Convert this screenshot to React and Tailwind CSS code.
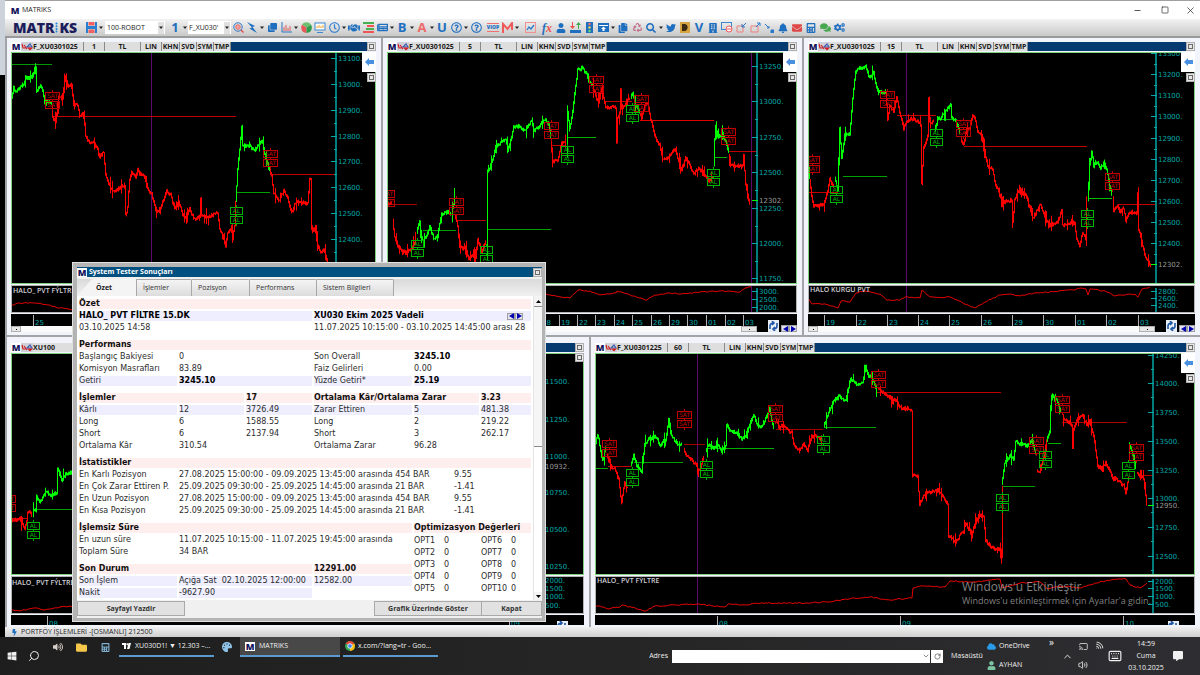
import { ChevronDown, ChevronUp, Search, Keyboard, Volume2, Wifi, RotateCw, Minus, Square, X, Cast } from 'lucide-react';
import {
  FaBolt, FaClone, FaRegClock, FaHandshake, FaNewspaper, FaRegQuestionCircle,
  FaUser, FaTrafficLight, FaCopy, FaRecycle, FaTwitter, FaBuilding, FaBell, FaEnvelope, FaCalculator,
  FaCogs, FaComments, FaWindows, FaCloud, FaFolder, FaPalette, FaVolumeUp, FaCommentAlt, FaUpload, FaSearch,
} from 'react-icons/fa';

const RED = '#ff0000';
const GREEN = '#00ff00';
const TEAL = '#00a8a8';
const WIDE_FONT = "'DejaVu Sans', sans-serif";

// Price series: [color, [[x, y], ...]]. Levels: [color, x1, x2, y]. Marks: x, top y of the first box.
const CHARTS = {
  one: {
    origin: [12, 53],
    cursor: 151,
    axis: 336,
    scale: [[58, '13100.'], [84, '13000.'], [110, '12900.'], [136, '12800.'], [161, '12700.'], [187, '12600.'], [213, '12500.'], [239, '12400.'], [265, '12300.']],
    levels: [['#009800', 12, 52, 64], ['#c00000', 53, 236, 116], ['#00a000', 237, 270, 192], ['#c00000', 271, 336, 174]],
    series: [
      [GREEN, [[12, 98], [14, 88], [17, 92], [21, 86], [24, 84], [26, 77], [33, 76], [35, 69], [36, 66], [37, 92], [40, 86], [42, 87], [45, 99], [48, 101], [52, 103]]],
      [RED, [[52, 105], [53, 118], [56, 120], [58, 108], [59, 95], [63, 99], [65, 76], [68, 85], [72, 84], [74, 105], [78, 105], [80, 116], [84, 112], [86, 135], [90, 143], [94, 141], [98, 150], [100, 156], [104, 152], [106, 175], [111, 188], [114, 191], [120, 187], [125, 185], [126, 215], [128, 207], [130, 178], [132, 172], [136, 176], [138, 170], [140, 173], [145, 176], [148, 188], [152, 194], [157, 212], [162, 205], [167, 190], [171, 195], [175, 208], [179, 200], [183, 215], [186, 218], [190, 208], [195, 219], [200, 216], [201, 198], [202, 216], [210, 216], [218, 213], [220, 228], [224, 238], [226, 245], [228, 232], [232, 228], [233, 235], [235, 225], [236, 200]]],
      [GREEN, [[236, 200], [238, 170], [240, 150], [242, 126], [243, 145], [249, 145], [254, 150], [257, 148], [261, 141], [263, 142], [266, 158], [270, 170]]],
      [RED, [[270, 170], [272, 176], [274, 192], [277, 198], [280, 200], [284, 190], [288, 198], [292, 212], [296, 202], [308, 203], [310, 179], [311, 180], [312, 230], [316, 228], [318, 245], [321, 252], [324, 250], [328, 262]]],
    ],
    sat: [[45, 92], [263, 150]],
    al: [[230, 207]],
    study: { name: 'HALO_ PVT FÝLTRE', origin: [12, 286], nameAt: [13, 293], scale: [], line: [[12, 305], [20, 303], [36, 303], [48, 305], [60, 308], [72, 310], [85, 309]] },
    time: { origin: [11, 314], ticks: [[33, '25']] },
  },
  two: {
    origin: [388, 53],
    cursor: 751,
    axis: 757,
    last: [200, '12302.'],
    scale: [[66, '13250.'], [101, '13000.'], [137, '12750.'], [172, '12500.'], [208, '12250.'], [243, '12000.'], [278, '11750.']],
    levels: [['#a80000', 388, 417, 204], ['#00a000', 423, 456, 230], ['#c00000', 458, 486, 220], ['#00a000', 487, 551, 229], ['#c00000', 551, 565, 145], ['#00b000', 568, 596, 137], ['#c00000', 605, 632, 101], ['#e00000', 640, 714, 120], ['#00b000', 715, 727, 157], ['#c00000', 729, 757, 151]],
    series: [
      [RED, [[388, 204], [392, 203]]],
      [RED, [[393, 220], [395, 237], [398, 245], [402, 250], [406, 252], [412, 248], [415, 243], [416, 235]]],
      [GREEN, [[417, 232], [420, 220], [421, 236], [424, 240], [427, 236], [430, 226], [434, 238], [438, 236], [440, 224], [442, 214], [446, 212], [452, 213], [454, 205], [454, 188]]],
      [RED, [[455, 215], [458, 225], [460, 247], [466, 248], [469, 258], [474, 254], [476, 258], [478, 238], [482, 252], [486, 240]]],
      [GREEN, [[487, 260], [487, 172], [490, 168], [493, 158], [496, 146], [500, 143], [506, 138], [508, 150], [511, 140], [514, 126], [520, 126], [525, 130], [532, 120], [534, 130], [539, 127], [545, 119], [549, 123], [551, 137]]],
      [RED, [[551, 140], [553, 161], [558, 160], [562, 143], [566, 141]]],
      [GREEN, [[567, 150], [568, 112], [570, 128], [573, 112], [576, 85], [578, 70], [583, 67], [587, 74], [590, 82], [593, 85]]],
      [RED, [[593, 85], [597, 100], [600, 97], [602, 88], [606, 107], [612, 106], [616, 108], [617, 143], [618, 118], [620, 113], [621, 90], [622, 108], [630, 98]]],
      [GREEN, [[631, 97], [633, 92], [636, 105], [640, 112]]],
      [RED, [[640, 113], [642, 118], [645, 106], [648, 103], [651, 118], [656, 138], [660, 145], [663, 158], [668, 158], [672, 152], [675, 149], [679, 160], [682, 170], [686, 158], [690, 165], [694, 174], [699, 168], [705, 174], [709, 180], [713, 176]]],
      [GREEN, [[714, 165], [715, 140], [716, 126], [718, 136], [723, 134], [727, 145], [729, 152]]],
      [RED, [[729, 155], [731, 165], [737, 166], [743, 165], [744, 155], [746, 185], [750, 203]]],
    ],
    sat: [[380, 190], [449, 198], [544, 122], [589, 76], [634, 95], [721, 128]],
    al: [[411, 240], [480, 246], [561, 146], [626, 105], [707, 169]],
    study: {
      origin: [388, 286],
      scale: [[291, '3000.'], [299, '2500.'], [307, '2000.']],
      line: [[530, 296], [546, 294], [560, 297], [570, 298], [578, 290], [590, 291], [600, 295], [616, 293], [617, 291], [630, 295], [640, 298], [647, 300], [655, 295], [668, 293], [680, 294], [700, 292], [720, 291], [740, 292], [745, 288], [751, 287]],
    },
    time: { origin: [387, 314], ticks: [[540, '18'], [559, '19'], [577, '22'], [595, '23'], [614, '24'], [632, '25'], [651, '26'], [669, '29'], [687, '30'], [706, '01'], [725, '02'], [743, '03']] },
  },
  three: {
    origin: [809, 53],
    cursor: 906,
    axis: 1156,
    last: [264, '12302.'],
    scale: [[53, '13300.'], [74, '13200.'], [95, '13100.'], [116, '13000.'], [138, '12900.'], [159, '12800.'], [180, '12700.'], [201, '12600.'], [222, '12500.'], [243, '12400.']],
    levels: [['#c00000', 808, 838, 192], ['#00a000', 843, 887, 176], ['#c00000', 897, 936, 115], ['#00b000', 938, 956, 119], ['#c00000', 964, 1087, 146], ['#00c000', 1088, 1112, 198], ['#c00000', 1118, 1156, 204]],
    series: [
      [GREEN, [[808, 150], [809, 168], [810, 178]]],
      [RED, [[810, 180], [812, 197], [814, 205], [824, 205], [828, 190], [830, 178], [834, 186]]],
      [GREEN, [[835, 178], [838, 190], [839, 165], [840, 128], [842, 158], [845, 134], [850, 134], [852, 110], [854, 88], [856, 72], [859, 68], [866, 66], [870, 78], [874, 72], [877, 88], [880, 92], [886, 91]]],
      [RED, [[886, 92], [888, 118], [890, 105], [894, 112], [897, 97], [900, 112], [904, 128], [907, 122], [912, 118], [918, 121], [921, 124], [922, 183], [924, 148], [928, 135], [929, 98], [930, 122], [934, 122]]],
      [GREEN, [[935, 130], [938, 120], [943, 115], [948, 108], [951, 104], [952, 118], [956, 120], [960, 132]]],
      [RED, [[961, 138], [964, 145], [967, 128], [970, 128], [973, 114], [976, 120], [978, 132], [982, 134], [984, 146], [988, 165], [993, 170], [995, 180], [1000, 195], [1003, 202], [1012, 200], [1013, 222], [1015, 198], [1020, 190], [1026, 195], [1028, 200], [1033, 218], [1041, 204], [1045, 217], [1050, 225], [1058, 222], [1062, 210], [1063, 225], [1073, 222], [1075, 223], [1077, 238], [1080, 245], [1083, 232], [1086, 238], [1087, 200]]],
      [GREEN, [[1088, 200], [1090, 165], [1092, 152], [1094, 165], [1098, 163], [1101, 168], [1104, 162], [1107, 170], [1110, 185], [1112, 195]]],
      [RED, [[1113, 197], [1114, 210], [1118, 205], [1120, 212], [1124, 208], [1126, 220], [1130, 212], [1137, 213], [1138, 194], [1139, 230], [1142, 240], [1145, 255], [1148, 260], [1151, 266]]],
    ],
    sat: [[805, 156], [880, 91], [956, 120], [1105, 173]],
    al: [[830, 186], [930, 129], [1081, 210]],
    study: {
      name: 'HALO KURGU PVT',
      nameAt: [810, 292],
      origin: [809, 286],
      scale: [[291, '2800.'], [298, '2600.'], [305, '2400.']],
      line: [[808, 298], [812, 304], [825, 304], [838, 308], [841, 301], [850, 302], [856, 293], [865, 291], [880, 294], [887, 300], [900, 300], [905, 297], [920, 298], [922, 290], [930, 297], [950, 297], [965, 304], [975, 308], [985, 302], [1000, 295], [1010, 294], [1020, 296], [1035, 293], [1075, 290], [1080, 288], [1086, 289], [1088, 295], [1090, 289], [1105, 291], [1115, 296], [1135, 294], [1138, 297], [1142, 289], [1150, 287]],
    },
    time: { origin: [808, 314], ticks: [[824, '19'], [856, '22'], [887, '23'], [918, '24'], [949, '25'], [981, '26'], [1012, '29'], [1043, '30'], [1075, '01'], [1106, '02'], [1138, '03']] },
  },
  four: {
    origin: [12, 354],
    axis: 543,
    last: [466, '10932.'],
    scale: [[381, '11500.'], [419, '11250.'], [456, '11000.'], [492, '10750.'], [529, '10500.'], [566, '10250.']],
    levels: [['#c00000', 10, 28, 518], ['#00a000', 36, 80, 509]],
    series: [
      [RED, [[9, 516], [14, 520], [20, 518], [25, 528], [27, 520], [28, 512], [32, 512]]],
      [GREEN, [[33, 511], [36, 510], [37, 495], [40, 502], [46, 492], [52, 495], [57, 492], [58, 468], [62, 480], [66, 474], [72, 472], [80, 470]]],
    ],
    sat: [[1, 495]],
    al: [[27, 522]],
    study: { name: 'HALO_ PVT FÝLTRE', nameAt: [12, 585], origin: [12, 577], scale: [[580, '2000.'], [588, '1500.'], [596, '1000.'], [605, '500.']], line: [[9, 610], [20, 611], [35, 608], [45, 610], [60, 607], [80, 606]] },
    time: { origin: [11, 615], ticks: [[47, '08'], [509, '09']] },
  },
  five: {
    origin: [596, 354],
    cursor: 697,
    axis: 1153,
    last: [505, '12950.'],
    scale: [[355, '14250.'], [383, '14000.'], [412, '13750.'], [441, '13500.'], [470, '13250.'], [498, '13000.'], [527, '12750.'], [556, '12500.']],
    levels: [['#00b000', 595, 608, 468], ['#c00000', 608, 631, 466], ['#00a000', 634, 683, 462], ['#a00000', 684, 705, 444], ['#00b000', 706, 774, 448], ['#a00000', 776, 823, 429], ['#00a000', 824, 876, 427], ['#c00000', 877, 1001, 392], ['#00a000', 1003, 1035, 486], ['#00b000', 1048, 1061, 443], ['#b00000', 1062, 1127, 422], ['#b00000', 1139, 1153, 475]],
    series: [
      [GREEN, [[595, 446], [598, 434], [601, 450], [603, 460], [606, 448]]],
      [RED, [[607, 455], [611, 465], [616, 470], [619, 480], [622, 502], [625, 482], [628, 488]]],
      [GREEN, [[631, 465], [634, 455], [638, 468], [642, 470], [645, 445], [650, 438], [656, 436], [660, 444], [666, 440], [669, 420], [672, 436], [678, 444], [682, 444]]],
      [RED, [[684, 448], [687, 456], [692, 460], [697, 466], [700, 470], [704, 455]]],
      [GREEN, [[706, 450], [710, 445], [714, 448], [718, 444], [722, 450], [726, 446], [727, 425], [730, 430], [736, 432], [742, 438], [746, 436], [750, 424], [754, 415], [758, 425], [762, 427], [766, 418], [770, 408], [772, 420], [774, 428]]],
      [RED, [[776, 420], [780, 428], [784, 424], [788, 430], [792, 432], [794, 444], [798, 450], [804, 444], [808, 450], [812, 436], [818, 436], [822, 440]]],
      [GREEN, [[824, 425], [828, 416], [834, 400], [840, 396], [846, 400], [851, 378], [858, 384], [863, 382], [866, 366], [868, 374], [874, 380], [877, 392]]],
      [RED, [[878, 388], [884, 392], [890, 398], [896, 400], [902, 408], [908, 408], [912, 410], [913, 475], [918, 476], [920, 504], [925, 494], [932, 492], [938, 490], [944, 496], [948, 504], [949, 535], [956, 542], [964, 530], [966, 522], [972, 535], [976, 520], [980, 515], [984, 515], [986, 540], [992, 548], [998, 548], [1001, 550], [1002, 558], [1002, 486]]],
      [GREEN, [[1002, 484], [1005, 462], [1010, 456], [1014, 458], [1016, 442], [1022, 444], [1028, 445], [1033, 440], [1036, 455]]],
      [RED, [[1037, 470], [1040, 472], [1044, 458], [1047, 445]]],
      [GREEN, [[1047, 440], [1050, 432], [1051, 405], [1053, 395], [1057, 400], [1061, 410]]],
      [RED, [[1063, 418], [1066, 420], [1072, 424], [1073, 448], [1074, 428], [1078, 418], [1083, 416], [1087, 424], [1090, 420], [1094, 435], [1098, 466], [1102, 468], [1106, 462], [1110, 470], [1114, 478], [1119, 480], [1124, 485], [1126, 494], [1129, 478]]],
      [GREEN, [[1129, 460], [1129, 443], [1131, 448], [1134, 455], [1136, 468]]],
      [RED, [[1137, 472], [1140, 476], [1143, 476], [1144, 480], [1147, 503]]],
    ],
    sat: [[602, 440], [677, 411], [768, 405], [871, 371], [1029, 437], [1055, 396], [1129, 444]],
    al: [[626, 469], [700, 461], [817, 436], [996, 494], [1039, 451], [1122, 462]],
    study: {
      name: 'HALO_ PVT FÝLTRE',
      nameAt: [597, 583],
      origin: [596, 577],
      scale: [[581, '2000.'], [588, '1500.'], [596, '1000.'], [604, '500.']],
      line: [[595, 606], [600, 606], [608, 609], [620, 607], [622, 605], [635, 608], [645, 611], [655, 606], [697, 604], [725, 607], [728, 604], [740, 605], [765, 603], [800, 603], [830, 602], [845, 599], [870, 597], [890, 600], [912, 598], [913, 588], [920, 586], [945, 587], [950, 581], [975, 582], [1000, 579], [1002, 588], [1020, 583], [1040, 582], [1048, 589], [1060, 586], [1080, 588], [1095, 583], [1110, 580], [1126, 579], [1130, 585], [1140, 588], [1147, 583]],
    },
    time: { origin: [595, 615], ticks: [[717, '08'], [900, '09'], [1123, '10']] },
  },
};

function makeRandom(points) {
  let seed = points[0][0] * 7 + points[0][1];
  return () => {
    seed = (seed * 1103515245 + 12345) % 2147483648;
    return seed / 2147483648;
  };
}

// One bar per pixel column with a repeatable wiggle
function barsPath(points) {
  const rand = makeRandom(points);
  let d = '';
  let prev = points[0][1];
  for (let i = 1; i < points.length; i += 1) {
    const [x0, y0] = points[i - 1];
    const [x1, y1] = points[i];
    if (x0 === x1) {
      d += `M${x0 + 0.5} ${y0}V${y1}`;
      prev = y1;
      continue;
    }
    for (let x = x0; x < x1; x += 1) {
      const y = y0 + ((y1 - y0) * (x - x0 + 1)) / (x1 - x0) + (rand() - 0.5) * 2.5;
      const wick = rand() > 0.82 ? 8 : 1.5;
      const top = Math.min(prev, y) - rand() * wick;
      const bottom = Math.max(prev, y) + 0.8 + rand() * wick;
      d += `M${x + 0.5} ${top.toFixed(1)}V${bottom.toFixed(1)}`;
      prev = y;
    }
  }
  return d;
}

function linePath(points) {
  const rand = makeRandom(points);
  let d = `M${points[0][0]} ${points[0][1]}`;
  for (let i = 1; i < points.length; i += 1) {
    const [x0, y0] = points[i - 1];
    const [x1, y1] = points[i];
    for (let x = x0 + 2; x < x1; x += 2) {
      d += `L${x} ${(y0 + ((y1 - y0) * (x - x0)) / (x1 - x0) + (rand() - 0.5) * 1.2).toFixed(1)}`;
    }
    d += `L${x1} ${y1}`;
  }
  return d;
}

function Mark({ x, y, text, color }) {
  const width = text === 'AL' ? 12 : 14;
  const middle = x + width / 2 + 0.5;
  return (
    <g>
      <path d={`M${middle} ${y - 2}v2M${middle} ${y + 7}v2M${middle} ${y + 16}v3`} stroke={color} />
      {[y, y + 9].map((top) => (
        <g key={top}>
          <rect x={x + 0.5} y={top + 0.5} width={width} height="7" fill="none" stroke={color} />
          <text x={middle} y={top + 6} textAnchor="middle" fontSize="6" fontFamily={WIDE_FONT} fill={color}>{text}</text>
        </g>
      ))}
    </g>
  );
}

function Scale({ axis, rows, top, bottom, minor }) {
  return (
    <g>
      <path d={`M${axis} ${top}V${bottom}`} stroke={TEAL} strokeWidth="1.5" />
      {rows.map(([y, label]) => (
        <g key={label}>
          <path d={`M${axis - 5} ${y + 0.5}h6`} stroke={TEAL} />
          {minor && <path d={`M${axis - 2} ${y + minor + 0.5}h3`} stroke={TEAL} />}
          <text x={axis + 2} y={y + 3} fontSize="7" fontFamily={WIDE_FONT} fill={TEAL}>{label}</text>
        </g>
      ))}
    </g>
  );
}

function PriceChart({ chart }) {
  const [ox, oy] = chart.origin;
  const minor = Math.round((chart.scale[1][0] - chart.scale[0][0]) / 2);
  return (
    <svg className="block h-full w-full bg-black" role="img" aria-label="Price chart">
      <g transform={`translate(${-ox} ${-oy})`}>
        {chart.cursor && <path d={`M${chart.cursor + 0.5} ${oy}v400`} stroke="#5c0a6b" />}
        {chart.levels.map(([color, x1, x2, y]) => (
          <path key={`${x1}-${y}`} d={`M${x1} ${y + 0.5}H${x2}`} stroke={color} />
        ))}
        {chart.series.map(([color, points]) => (
          <path key={points[0].join('-')} d={barsPath(points)} stroke={color} />
        ))}
        {chart.sat.map(([x, y]) => <Mark key={x} x={x} y={y} text="SAT" color="#c00000" />)}
        {chart.al.map(([x, y]) => <Mark key={x} x={x} y={y} text="AL" color="#00b400" />)}
        <Scale axis={chart.axis} rows={chart.scale} top={oy} bottom={oy + 400} minor={minor} />
        {chart.last && (
          <g>
            <path d={`M${chart.axis - 5} ${chart.last[0] + 0.5}h6`} stroke={GREEN} />
            <text x={chart.axis + 2} y={chart.last[0] + 3} fontSize="7" fontFamily={WIDE_FONT} fill="#989898">{chart.last[1]}</text>
          </g>
        )}
      </g>
    </svg>
  );
}

function StudyChart({ chart }) {
  const { study } = chart;
  const [ox, oy] = study.origin;
  return (
    <svg className="block h-full w-full bg-black" role="img" aria-label="Indicator">
      <g transform={`translate(${-ox} ${-oy})`}>
        {chart.cursor && <path d={`M${chart.cursor + 0.5} ${oy}v60`} stroke="#5c0a6b" />}
        <path d={linePath(study.line)} fill="none" stroke="#e00000" />
        {study.scale.length > 0 && <Scale axis={chart.axis} rows={study.scale} top={oy + 2} bottom={oy + 60} />}
        {study.name && <text x={study.nameAt[0]} y={study.nameAt[1]} fontSize="7" fontWeight="600" fill="#d0d0d8">{study.name}</text>}
      </g>
    </svg>
  );
}

function TimeAxis({ chart }) {
  const [ox, oy] = chart.time.origin;
  return (
    <svg className="block min-h-0 w-full flex-1 bg-black" role="img" aria-label="Time axis">
      <g transform={`translate(${-ox} ${-oy})`}>
        {chart.time.ticks.map(([x, label]) => (
          <g key={x}>
            <path d={`M${x + 0.5} ${oy + 1}v11`} stroke="#b0b0b0" />
            <text x={x + 2} y={oy + 11} fontSize="7" fontFamily={WIDE_FONT} fill={TEAL}>{label}</text>
          </g>
        ))}
      </g>
    </svg>
  );
}

function MLogo() {
  return <span className="w-[10px] shrink-0 bg-white text-center text-[9px] leading-[9px] font-extrabold text-[#14145a]">M</span>;
}

function SmallSquare({ label }) {
  return (
    <button type="button" aria-label={label} className="flex h-[9px] w-[9px] shrink-0 items-center justify-center border border-[#b0b0b0] bg-[#e6e6e6]">
      <span className="h-[5px] w-[5px] border border-[#6a6a6a]" />
    </button>
  );
}

function ArrowPair() {
  return (
    <span className="flex h-[7px] shrink-0 bg-[#e4e4f0]">
      <button type="button" aria-label="Previous" className="flex w-2 items-center justify-center border border-[#a0a0a0]">
        <svg width="5" height="6" viewBox="0 0 5 6"><path d="M5 0V6L0 3Z" fill="#0000b0" /></svg>
      </button>
      <button type="button" aria-label="Next" className="flex w-2 items-center justify-center border border-[#a0a0a0]">
        <svg width="5" height="6" viewBox="0 0 5 6"><path d="M0 0V6L5 3Z" fill="#0000b0" /></svg>
      </button>
    </span>
  );
}

const CELL = 'shrink-0 border-r border-[#8a8a8a] bg-[#dedede] text-center';

function ChartWindow({ chart, symbol, period, lower, plain }) {
  return (
    <section className={lower
      ? 'flex min-h-0 min-w-0 flex-col border-l-2 border-[#a2a4a8] bg-[#f1f4fa] pt-[6px] pr-[5px] pb-[2px] pl-1'
      : 'flex min-h-0 min-w-0 flex-col border-b-2 border-l-2 border-[#a2a4a8] bg-[#f1f4fa] pt-1 pr-[5px] pb-[3px] pl-1'}
    >
      <header className="flex h-[9px] shrink-0 bg-[#043a70] text-[7px] leading-[9px] font-bold text-[#1a1a1a]">
        <MLogo />
        <span className="flex w-3 shrink-0 items-center justify-center bg-[#d0d0d8]">
          <svg width="12" height="8" viewBox="0 0 12 8" fill="none">
            <path d="M1 1L2 5H5M3 2L6 6" stroke="#d02020" strokeWidth="1.2" />
            <path d="M6 4L9 1L11 4Z" stroke="#4060b0" strokeWidth="1.2" />
            <path d="M6 4.500H12L9 7.500Z" fill="#d02020" />
          </svg>
        </span>
        <span className={plain ? 'w-[60px] shrink-0 bg-[#dedede]' : 'w-[51px] shrink-0 border-r border-[#8a8a8a] bg-[#dedede]'}>{symbol}</span>
        {!plain && (
          <>
            <span className={`${CELL} w-[21px]`}>{period}</span>
            <span className={`${CELL} w-9`}>TL</span>
            <span className={`${CELL} w-[21px]`}>LIN</span>
            <span className={`${CELL} w-[18px]`}>KHN</span>
            <span className={`${CELL} w-[17px]`}>SVD</span>
            <span className={`${CELL} w-[17px]`}>SYM</span>
            <span className={`${CELL} w-[17px]`}>TMP</span>
          </>
        )}
        <span className="ml-auto flex"><SmallSquare label="Maximize" /></span>
      </header>

      <div className="relative mt-px min-h-0 flex-1 border border-[#7fd07f]">
        <PriceChart chart={chart} />
        <div className="absolute -top-px -right-px flex flex-col items-end gap-px">
          {!plain && (
            <button type="button" aria-label="Back" className="flex h-5 w-[14px] items-center justify-center bg-white">
              <svg width="9" height="8" viewBox="0 0 9 8"><path d="M0 4L4 0V2H9V6H4V8Z" fill="#4a90e0" /></svg>
            </button>
          )}
          <SmallSquare label="Pin" />
        </div>
      </div>

      <div className={lower ? 'my-px h-[38px] shrink-0 border border-[#b4b4b4]' : 'my-px h-7 shrink-0 border border-[#b4b4b4]'}>
        <StudyChart chart={chart} />
      </div>

      <div className={lower ? 'flex h-[10px] shrink-0 overflow-hidden' : 'flex h-[18px] shrink-0'}>
        <div className="flex min-w-0 flex-1 flex-col">
          <TimeAxis chart={chart} />
          {!lower && (
            <div className="flex h-[6px] shrink-0 justify-between bg-[#fafafa]">
              <span className="flex w-[10px] items-center justify-center border border-[#b0b0b0] bg-[#e8e8e8]"><i className="h-px w-px bg-black" /></span>
              <span className="flex w-4 items-center justify-center border border-[#b0b0b0] bg-[#e8e8e8]"><i className="h-px w-px bg-black" /></span>
            </div>
          )}
        </div>
        <div className="flex w-10 shrink-0 items-end justify-end gap-[2px] bg-black">
          <button type="button" aria-label="Refresh" className={lower ? 'mr-4 h-1 w-[11px] overflow-hidden bg-[#e8eef8]' : 'flex h-3 w-[11px] items-center justify-center bg-[#e8eef8]'}>
            <svg width="9" height="10" viewBox="0 0 9 10" fill="none" stroke="#1d55a5" strokeWidth="1.6"><path d="M1 8V5C1 3 2 2 5 2M3 0L5 2L3 4M8 2V5C8 7 7 8 4 8M6 6L4 8L6 10" /></svg>
          </button>
          {!lower && <ArrowPair />}
        </div>
      </div>
    </section>
  );
}

function Caret() {
  return <svg className="shrink-0" width="6" height="4" viewBox="0 0 6 4"><path d="M1 0.500H5L3 3Z" fill="#222" /></svg>;
}

function Tool({ label, color, caret, gap, children }) {
  return (
    <>
      <button type="button" aria-label={label} className={gap ? 'ml-[3px] flex w-[14px] shrink-0 items-center justify-center text-[12px]' : 'flex w-[14px] shrink-0 items-center justify-center text-[12px]'} style={{ color: color || '#1f6fc0' }}>
        {children}
      </button>
      {caret && <Caret />}
    </>
  );
}

function Toolbar() {
  return (
    <div className="flex h-[19px] shrink-0 items-center overflow-hidden border-b-2 border-[#9a9a9a] bg-linear-to-b from-[#f2f2f2] to-[#c9c9c9] pl-2">
      <div className="flex w-[71px] shrink-0 items-center text-[14px] leading-none font-extrabold text-[#1c1c5c]" aria-label="MATRiKS">
        <span>MATR</span>
        <svg width="5" height="11" viewBox="0 0 5 11"><g fill="#1e88d8"><circle cx="2.500" cy="1.500" r="1.100" /><circle cx="2.500" cy="4.200" r="1" /><circle cx="2.500" cy="6.900" r="1" /><circle cx="2.500" cy="9.600" r="1" /></g></svg>
        <span>KS</span>
      </div>
      <Tool label="Save" color="#2a6fc0" caret>
        <svg width="11" height="11" viewBox="0 0 11 11"><path d="M0 0H2V4H9V0H11V11H9V7H2V11H0Z" fill="#2a7fd0" /><path d="M2.500 0H8.500V3.500H2.500ZM2.500 7.500H8.500V11H2.500Z" fill="#f06060" /></svg>
      </Tool>
      <label className="ml-[1px] flex h-[13px] w-[60px] shrink-0 items-center bg-white pr-px">
        <select aria-label="Sayfa" className="min-w-0 flex-1 appearance-none pl-[2px] text-[7px] leading-[13px]" defaultValue="100-ROBOT">
          <option>100-ROBOT</option>
        </select>
        <span className="bg-[#e0e0e0] py-1"><Caret /></span>
      </label>
      <Tool label="Period" caret gap><span className="text-[13px] leading-none font-bold">1</span></Tool>
      <label className="flex h-[13px] w-[43px] shrink-0 items-center bg-white pr-px">
        <select aria-label="Sembol" className="min-w-0 flex-1 appearance-none pl-px text-[7px] leading-[13px]" defaultValue="F_XU030'">
          <option>F_XU030'</option>
        </select>
        <span className="bg-[#e0e0e0] py-1"><Caret /></span>
      </label>
      <Tool label="Search symbol">
        <svg width="11" height="11" viewBox="0 0 11 11" fill="none"><circle cx="5" cy="5" r="4.200" stroke="#2a78c8" /><circle cx="5" cy="5" r="2.300" fill="#f4a0a0" stroke="#e07070" /><path d="M8 8L10.500 10.500" stroke="#e05050" strokeWidth="1.500" /></svg>
      </Tool>
      <Tool label="Quick order" caret>
        <svg width="10" height="11" viewBox="0 0 10 11"><path d="M0 0L8 4L5.500 5L10 11L2.500 6.500L5 5.500Z" fill="#1f6fc0" /></svg>
      </Tool>
      <Tool label="Windows"><FaClone size={9} /></Tool>
      <Tool label="Chart" caret>
        <svg width="11" height="11" viewBox="0 0 11 11" fill="none"><path d="M1 0V10H11" stroke="#2a78c8" /><path d="M3 9V5M5 9V3M7 9V6M9 9V4" stroke="#e06060" /></svg>
      </Tool>
      <Tool label="Cube">
        <svg width="11" height="11" viewBox="0 0 12 12"><path d="M6 6L1 3A6 6 0 0 1 11 3Z" fill="#6cc070" /><path d="M6 6V12A6 6 0 0 1 1 3Z" fill="#e85858" /><path d="M6 6L11 3A6 6 0 0 1 6 12Z" fill="#2f9a4a" /></svg>
      </Tool>
      <Tool label="Screen">
        <svg width="12" height="11" viewBox="0 0 12 11" fill="none"><rect x="1" y="1" width="10" height="7" fill="#fff" stroke="#3a88d0" /><path d="M3 6V4M5 6V3M7 6V4M9 6V3" stroke="#f0a020" /><path d="M3 10.500H9" stroke="#3a88d0" /></svg>
      </Tool>
      <Tool label="Time" caret color="#2f7fce"><FaRegClock size={11} /></Tool>
      <Tool label="Agreement"><FaHandshake size={12} /></Tool>
      <Tool label="Depth">
        <svg width="11" height="11" viewBox="0 0 11 11"><path d="M0 0H11V2H0ZM3 6H11V8H3Z" fill="#48b050" /><path d="M4 3H11V5H4ZM0 9H11V11H0Z" fill="#ee5555" /></svg>
      </Tool>
      <Tool label="News" caret><FaNewspaper size={11} /></Tool>
      <Tool label="Bold" caret><b className="text-[13px] leading-none">B</b></Tool>
      <Tool label="A" caret color="#ee6a6a"><b className="text-[13px] leading-none">A</b></Tool>
      <Tool label="U"><b className="text-[13px] leading-none">U</b></Tool>
      <Tool label="Help" caret><FaRegQuestionCircle size={11} /></Tool>
      <Tool label="Info"><FaRegQuestionCircle size={11} /></Tool>
      <Tool label="VIOP" gap><span className="border-y border-[#ee7070] text-[5px] leading-[7px] font-extrabold">VIOP</span></Tool>
      <Tool label="M" caret color="#ee5a5a">
        <svg width="11" height="11" viewBox="0 0 11 11" fill="none" stroke="currentColor" strokeWidth="2"><path d="M1 11V2L5.500 7L10 1V8" /></svg>
      </Tool>
      <Tool label="Trend" gap>
        <svg width="11" height="11" viewBox="0 0 11 11" fill="none"><rect x="0.500" y="0.500" width="10" height="10" stroke="#f09090" /><path d="M2 8L4 5L6 7L9 3" stroke="#2a78c8" strokeWidth="1.300" /></svg>
      </Tool>
      <Tool label="Function" gap><i className="font-['Liberation_Serif',serif] text-[12px] leading-none font-bold">f<span className="text-[#ee5555]">x</span></i></Tool>
      <Tool label="User"><FaUser size={10} /></Tool>
      <Tool label="Transfer">
        <svg width="11" height="11" viewBox="0 0 11 11"><path d="M0 8H11V11H0Z" fill="#1f6fc0" /><path d="M3 0V4H5L2.500 7L0 4H2V0Z" fill="#e85050" /><path d="M8 7V3H6L8.500 0L11 3H9V7Z" fill="#40a850" /></svg>
      </Tool>
      <Tool label="Signals" color="#1a8ac8">
        <svg width="7" height="11" viewBox="0 0 7 11"><rect width="7" height="11" fill="#1f6fc0" /><circle cx="3.500" cy="2" r="1.200" fill="#ff7070" /><circle cx="3.500" cy="5.500" r="1.200" fill="#ffd850" /><circle cx="3.500" cy="9" r="1.200" fill="#60e070" /></svg>
      </Tool>
      <Tool label="Upload" caret>
        <svg width="11" height="11" viewBox="0 0 11 11"><path d="M0 1H11V10H0Z" fill="#1f6fc0" /><path d="M1 3H10V4H1Z" fill="#fff" /><path d="M5.500 4.500L8 7H6.500V9H4.500V7H3Z" fill="#fff" /></svg>
      </Tool>
      <Tool label="Copy"><FaCopy size={10} /></Tool>
      <Tool label="Recycle" color="#c06a88"><FaRecycle size={9} /></Tool>
      <Tool label="Find" caret><FaSearch size={10} /></Tool>
      <Tool label="Twitter"><FaTwitter size={10} /></Tool>
      <Tool label="D">
        <svg width="10" height="11" viewBox="0 0 10 11"><path d="M0 0H10V11H0Z" fill="#d6a440" /><path d="M2 2H5C9 3 8 8 5 9H2Z" fill="#3a2a10" /></svg>
      </Tool>
      <Tool label="V"><b className="text-[13px] leading-none">V</b></Tool>
      <Tool label="Company"><FaBuilding size={10} /></Tool>
      <Tool label="Close screen">
        <svg width="12" height="11" viewBox="0 0 12 11" fill="none"><rect x="0.500" y="0.500" width="10" height="7" stroke="#3a88d0" /><circle cx="8" cy="7" r="3" fill="#fff" stroke="#ee5555" /><path d="M6 7H10" stroke="#ee5555" /></svg>
      </Tool>
      <Tool label="Shrink">
        <svg width="11" height="11" viewBox="0 0 11 11" fill="none"><path d="M1 4H7V10H1Z" stroke="#ee8080" /><path d="M10 1L6 5M6 2V5H9" stroke="#2a78c8" /></svg>
      </Tool>
      <Tool label="Expand">
        <svg width="11" height="11" viewBox="0 0 11 11" fill="none"><path d="M1 4H8V10H1Z" stroke="#ee8080" /><path d="M6 5L10 1M7 1H10V4" stroke="#2a78c8" /></svg>
      </Tool>
      <Tool label="Dock">
        <svg width="10" height="10" viewBox="0 0 10 10" fill="none" stroke="#2a78c8"><path d="M1 1L5 5M5 3V5H3" /><path d="M7 7H10V10H7Z" fill="#2a78c8" /></svg>
      </Tool>
      <Tool label="Alarm"><FaBell size={10} /></Tool>
      <Tool label="Mail" color="#e04848"><FaEnvelope size={10} /></Tool>
      <Tool label="Calculator"><FaCalculator size={10} /></Tool>
      <Tool label="Chat" color="#48a850"><FaComments size={11} /></Tool>
      <Tool label="Settings"><FaCogs size={11} /></Tool>
    </div>
  );
}

const PINK = 'bg-[#ffeeee] font-bold text-[#101010]';
const BLUE = 'bg-[#eeeeff]';

const STATS = [
  ['En Karlı Pozisyon', '27.08.2025 15:00:00 - 09.09.2025 13:45:00 arasında 454 BAR', '9.55'],
  ['En Çok Zarar Ettiren P.', '25.09.2025 09:30:00 - 25.09.2025 14:45:00 arasında 21 BAR', '-1.41'],
  ['En Uzun Pozisyon', '27.08.2025 15:00:00 - 09.09.2025 13:45:00 arasında 454 BAR', '9.55'],
  ['En Kısa Pozisyon', '25.09.2025 09:30:00 - 25.09.2025 14:45:00 arasında 21 BAR', '-1.41'],
];

const TRADES = [
  ['Kârlı', '12', '3726.49', 'Zarar Ettiren', '5', '481.38'],
  ['Long', '6', '1588.55', 'Long', '2', '219.22'],
  ['Short', '6', '2137.94', 'Short', '3', '262.17'],
  ['Ortalama Kâr', '310.54', '', 'Ortalama Zarar', '96.28', ''],
];

function Gap() {
  return <tr aria-hidden="true"><td colSpan={9} className="h-[3px]" /></tr>;
}

function Options() {
  return (
    <table className="table-fixed border-separate border-spacing-0">
      <tbody>
        {[1, 2, 3, 4, 5].map((n) => (
          <tr key={n} className="h-3">
            <td className="w-[30px] p-0">OPT{n}</td>
            <td className="w-[37px] p-0">0</td>
            <td className="w-[30px] p-0">OPT{n + 5}</td>
            <td className="p-0">0</td>
          </tr>
        ))}
      </tbody>
    </table>
  );
}

function ResultTable() {
  return (
    <table className="mt-px w-[456px] table-fixed border-separate border-spacing-[2px] font-['DejaVu_Sans',sans-serif] text-[8px] leading-[10px] whitespace-nowrap text-[#2c2c2c] [&_td]:p-0 [&_th]:p-0 [&_th]:text-left [&_th]:font-normal">
      <colgroup>
        <col className="w-[98px]" />
        <col className="w-[65px]" />
        <col className="w-[66px]" />
        <col className="w-[98px]" />
        <col className="w-[28px]" />
        <col className="w-[8px]" />
        <col className="w-[25px]" />
        <col className="w-[28px]" />
        <col className="w-[20px]" />
      </colgroup>
      <tbody>
        <tr><td colSpan={9} className={PINK}>Özet</td></tr>
        <tr>
          <td colSpan={3} className={`${BLUE} font-bold text-black`}>HALO_ PVT FİLTRE 15.DK</td>
          <td colSpan={6} className={`${BLUE} font-bold text-black`}>
            <span className="flex h-[10px] items-center justify-between pr-2">XU030 Ekim 2025 Vadeli <ArrowPair /></span>
          </td>
        </tr>
        <tr>
          <td colSpan={3}>03.10.2025 14:58</td>
          <td colSpan={6}>11.07.2025 10:15:00 - 03.10.2025 14:45:00 arası 28</td>
        </tr>
        <Gap />
        <tr><td colSpan={9} className={PINK}>Performans</td></tr>
        <tr><th>Başlangıç Bakiyesi</th><td colSpan={2}>0</td><td>Son Overall</td><td colSpan={5} className="font-bold text-black">3245.10</td></tr>
        <tr><th>Komisyon Masrafları</th><td colSpan={2}>83.89</td><td>Faiz Gelirleri</td><td colSpan={5}>0.00</td></tr>
        <tr>
          <th className={BLUE}>Getiri</th>
          <td colSpan={2} className={`${BLUE} font-bold text-black`}>3245.10</td>
          <td className={BLUE}>Yüzde Getiri*</td>
          <td colSpan={5} className={`${BLUE} font-bold text-black`}>25.19</td>
        </tr>
        <Gap />
        <tr>
          <td colSpan={2} className={PINK}>İşlemler</td>
          <td className={PINK}>17</td>
          <td colSpan={4} className={PINK}>Ortalama Kâr/Ortalama Zarar</td>
          <td colSpan={2} className={PINK}>3.23</td>
        </tr>
        {TRADES.map(([a, b, c, d, e, f], index) => (
          <tr key={a} className={index === 0 ? '[&>*]:bg-[#eeeeff]' : ''}>
            <th>{a}</th><td>{b}</td><td>{c}</td><td>{d}</td><td colSpan={3}>{e}</td><td colSpan={2}>{f}</td>
          </tr>
        ))}
        <Gap />
        <tr><td colSpan={9} className={PINK}>İstatistikler</td></tr>
        {STATS.map(([label, range, value]) => (
          <tr key={label}><th>{label}</th><td colSpan={5}>{range}</td><td colSpan={3}>{value}</td></tr>
        ))}
        <Gap />
        <tr>
          <td colSpan={4} className={PINK}>İşlemsiz Süre</td>
          <td colSpan={5} className={PINK}>Optimizasyon Değerleri</td>
        </tr>
        <tr>
          <th>En uzun süre</th>
          <td colSpan={3}>11.07.2025 10:15:00 - 11.07.2025 19:45:00 arasında</td>
          <td colSpan={5} rowSpan={6} className="align-top"><Options /></td>
        </tr>
        <tr><th>Toplam Süre</th><td colSpan={3}>34 BAR</td></tr>
        <tr aria-hidden="true"><td colSpan={4} className="h-[3px]" /></tr>
        <tr><td colSpan={3} className={PINK}>Son Durum</td><td className={PINK}>12291.00</td></tr>
        <tr>
          <th className={BLUE}>Son İşlem</th>
          <td colSpan={2} className={BLUE}>Açığa Sat&nbsp; 02.10.2025 12:00:00</td>
          <td className={BLUE}>12582.00</td>
        </tr>
        <tr><th className={BLUE}>Nakit</th><td colSpan={2} className={BLUE}>-9627.90</td><td /></tr>
      </tbody>
    </table>
  );
}

const TAB = 'border-t border-r border-[#a8a8a8] bg-linear-to-b from-[#f4f4f4] to-[#dcdcdc] pl-[6px] text-left text-[#333] rounded-tr-[2px]';
const DIALOG_BUTTON = 'border border-[#a9a9a9] bg-[#e1e1e1] text-center text-[#333]';

function ResultDialog() {
  return (
    <section role="dialog" aria-label="System Tester Sonuçları" className="absolute top-[262px] left-[72px] w-[474px] border-4 border-t-[5px] border-l-[5px] border-[#b4b4b4] bg-[#f0f0f0] outline -outline-offset-1 outline-[#e0e0e0]">
      <header className="flex h-[10px] items-center bg-[#02507f] text-[7px] leading-[10px] font-bold text-white">
        <MLogo />
        <h2 className="flex-1 pl-[2px]">System Tester Sonuçları</h2>
        <SmallSquare label="Close" />
      </header>
      <div role="tablist" className="mt-[2px] flex h-[17px] bg-linear-to-b from-[#dadada] to-[#f0f0f0] text-[7px] leading-[16px]">
        <button type="button" role="tab" aria-selected="true" className="w-[60px] border-r border-[#a8a8a8] bg-[#f4f4f4] pl-[19px] text-left font-bold [clip-path:polygon(15px_0,100%_0,100%_100%,0_100%)]">Özet</button>
        <button type="button" role="tab" className={`${TAB} w-[55px]`}>İşlemler</button>
        <button type="button" role="tab" className={`${TAB} w-[58px]`}>Pozisyon</button>
        <button type="button" role="tab" className={`${TAB} w-[67px]`}>Performans</button>
        <button type="button" role="tab" className={`${TAB} w-[77px]`}>Sistem Bilgileri</button>
      </div>
      <div className="flex bg-white">
        <ResultTable />
        <div className="flex min-w-0 flex-1 flex-col border-l border-[#e4e4e4]">
          <button type="button" aria-label="Scroll up" className="flex h-[10px] items-center justify-center bg-[#f4f4f4]">
            <svg width="5" height="3" viewBox="0 0 5 3"><path d="M0 3H5L2.500 0Z" fill="#000" /></svg>
          </button>
          <span className="h-[141px] border-y border-[#8a8a8a] bg-[#f6f6f6]" />
          <button type="button" aria-label="Scroll down" className="mt-auto flex h-2 items-center justify-center bg-[#f4f4f4]">
            <svg width="5" height="3" viewBox="0 0 5 3"><path d="M0 0H5L2.500 3Z" fill="#000" /></svg>
          </button>
        </div>
      </div>
      <footer className="flex h-[18px] items-start pt-px text-[7px] leading-[13px] font-bold">
        <button type="button" className={`${DIALOG_BUTTON} w-[108px]`}>Sayfayi Yazdir</button>
        <button type="button" className={`${DIALOG_BUTTON} ml-auto w-[108px]`}>Grafik Üzerinde Göster</button>
        <button type="button" className={`${DIALOG_BUTTON} w-[60px] border-l-0`}>Kapat</button>
      </footer>
    </section>
  );
}

function Taskbar() {
  return (
    <footer className="flex h-[38px] shrink-0 items-center bg-linear-to-r from-[#1e1e1e] via-[#252525] to-[#2e2e32] text-[7px] text-[#f0f0f0]">
      <button type="button" aria-label="Start" className="flex w-6 shrink-0 justify-center"><FaWindows size={10} /></button>
      <button type="button" aria-label="Search" className="flex w-5 shrink-0 justify-center"><Search size={12} className="-scale-x-100" /></button>
      <div className="flex h-5 shrink-0 items-stretch self-start">
        <button type="button" aria-label="Sound" className="flex w-7 items-center justify-center text-[#d8d0c8]"><FaVolumeUp size={10} /></button>
        <button type="button" aria-label="Explorer" className="flex w-[19px] items-center justify-center text-[#f5c84c]"><FaFolder size={11} /></button>
        <button type="button" aria-label="Calculator" className="flex w-7 items-center justify-center text-[#7fb0d0]"><FaCalculator size={9} /></button>
        <button type="button" className="flex w-[95px] items-center gap-1 border-b-2 border-[#5b9bd0] pl-[3px]">
          <svg width="9" height="6" viewBox="0 0 9 6" fill="#fff"><path d="M0 0H4V6H2V2H0ZM6.500 0H9L7.500 6H5Z" /><circle cx="5.300" cy="1.200" r="1" /></svg>
          <span>XU030D1! ▼ 12.303 –...</span>
        </button>
        <button type="button" aria-label="Paint" className="flex w-[26px] items-center justify-center text-[#8fc4e8]"><FaPalette size={10} /></button>
        <button type="button" className="flex w-[100px] items-center gap-1 border-b-2 border-[#5b9bd0] bg-[#484848] pl-[5px]"><MLogo />MATRIKS</button>
        <button type="button" className="ml-[3px] flex w-[95px] items-center gap-[3px] border-b-2 border-[#5b9bd0] pl-[2px]">
          <svg width="10" height="10" viewBox="0 0 10 10"><circle cx="5" cy="5" r="5" fill="#34a853" /><path d="M5 5L0.700 2.500A5 5 0 0 1 9.300 2.500Z" fill="#ea4335" /><path d="M5 5L9.300 2.500A5 5 0 0 1 5 10Z" fill="#fbbc05" /><circle cx="5" cy="5" r="2.300" fill="#4285f4" stroke="#fff" strokeWidth="0.800" /></svg>
          x.com/?lang=tr - Goo...
        </button>
      </div>
      <label className="ml-auto flex shrink-0 items-center gap-[4px]">
        Adres
        <span className="flex h-[13px] items-center bg-white">
          <input type="text" defaultValue="" className="h-[13px] w-[250px] px-1 text-[7px] text-black" />
          <ChevronDown size={8} className="text-[#555]" />
        </span>
      </label>
      <button type="button" aria-label="Reload" className="ml-px flex h-[13px] w-3 shrink-0 items-center justify-center bg-white text-[#333]"><RotateCw size={7} /></button>
      <span className="ml-2 w-9 shrink-0">Masaüstü</span>
      <div className="flex h-[38px] w-[62px] shrink-0 flex-col justify-around">
        <a href="#onedrive" className="flex items-center gap-[3px]"><FaCloud size={9} className="text-[#2a9be8]" />OneDrive</a>
        <a href="#ayhan" className="flex items-center gap-[3px]"><FaUser size={9} className="text-[#7cc4a0]" />AYHAN</a>
      </div>
      <span className="w-[13px] shrink-0 self-start text-[10px] leading-[10px]">»</span>
      <ChevronUp size={11} className="shrink-0" />
      <div className="ml-[2px] flex h-[38px] w-4 shrink-0 flex-col items-center justify-around"><Cast size={9} /><Volume2 size={10} /></div>
      <div className="flex h-[38px] w-4 shrink-0 flex-col items-center pt-1"><Wifi size={10} className="rotate-45" /></div>
      <Keyboard size={14} className="ml-px shrink-0" />
      <div className="flex w-12 shrink-0 flex-col items-center leading-3"><span>14:59</span><span>Cuma</span><span>03.10.2025</span></div>
      <button type="button" aria-label="Notifications" className="mr-[14px] flex w-4 shrink-0 justify-center"><FaCommentAlt size={10} /></button>
    </footer>
  );
}

export default function App() {
  return (
    <div className="relative flex h-screen flex-col overflow-hidden bg-black font-['Open_Sans','Noto_Sans',sans-serif] text-[#222]">
      <div className="flex min-h-0 flex-1">
        <div className="w-[5px] shrink-0 bg-black"><div className="h-[75px] bg-[#cdd3da]" /></div>
        <div className="flex min-w-0 flex-1 flex-col bg-white">
          <header className="flex h-[19px] shrink-0 items-center gap-[2px] border-t border-[#a0a0a0] pl-[5px]">
            <MLogo />
            <h1 className="flex-1 text-[7px]">MATRIKS</h1>
            <button type="button" aria-label="Minimize" className="flex w-[26px] justify-center"><Minus size={9} /></button>
            <button type="button" aria-label="Restore" className="flex w-[26px] justify-center"><Square size={8} /></button>
            <button type="button" aria-label="Close" className="flex w-5 justify-center"><X size={11} strokeWidth={1.5} /></button>
          </header>
          <Toolbar />
          <main className="grid min-h-0 flex-1 grid-rows-[299fr_290fr]">
            <div className="grid min-h-0 grid-cols-[376fr_421fr_398fr]">
              <ChartWindow chart={CHARTS.one} symbol="F_XU0301025" period="1" />
              <ChartWindow chart={CHARTS.two} symbol="F_XU0301025" period="5" />
              <ChartWindow chart={CHARTS.three} symbol="F_XU0301025" period="15" />
            </div>
            <div className="grid min-h-0 grid-cols-[584fr_611fr]">
              <ChartWindow chart={CHARTS.four} symbol="XU100" lower plain />
              <ChartWindow chart={CHARTS.five} symbol="F_XU0301225" period="60" lower />
            </div>
          </main>
          <div className="flex h-[10px] shrink-0 items-center gap-[3px] bg-linear-to-b from-[#f0f0f0] to-[#cfcfcf] pl-[6px] text-[7px] leading-[10px]">
            <FaBolt size={7} className="text-[#1f6fc0]" />
            <span>PORTFÖY İŞLEMLERİ -[OSMANLI] 212500</span>
          </div>
        </div>
      </div>
      <Taskbar />
      <ResultDialog />
      <div className="pointer-events-none absolute right-[50px] bottom-[68px] w-[188px] whitespace-nowrap text-[#b0b0b0]/75">
        <p className="text-[12px] leading-4">Windows'u Etkinleştir</p>
        <p className="text-[9px] leading-3">Windows'u etkinleştirmek için Ayarlar'a gidin.</p>
      </div>
    </div>
  );
}
